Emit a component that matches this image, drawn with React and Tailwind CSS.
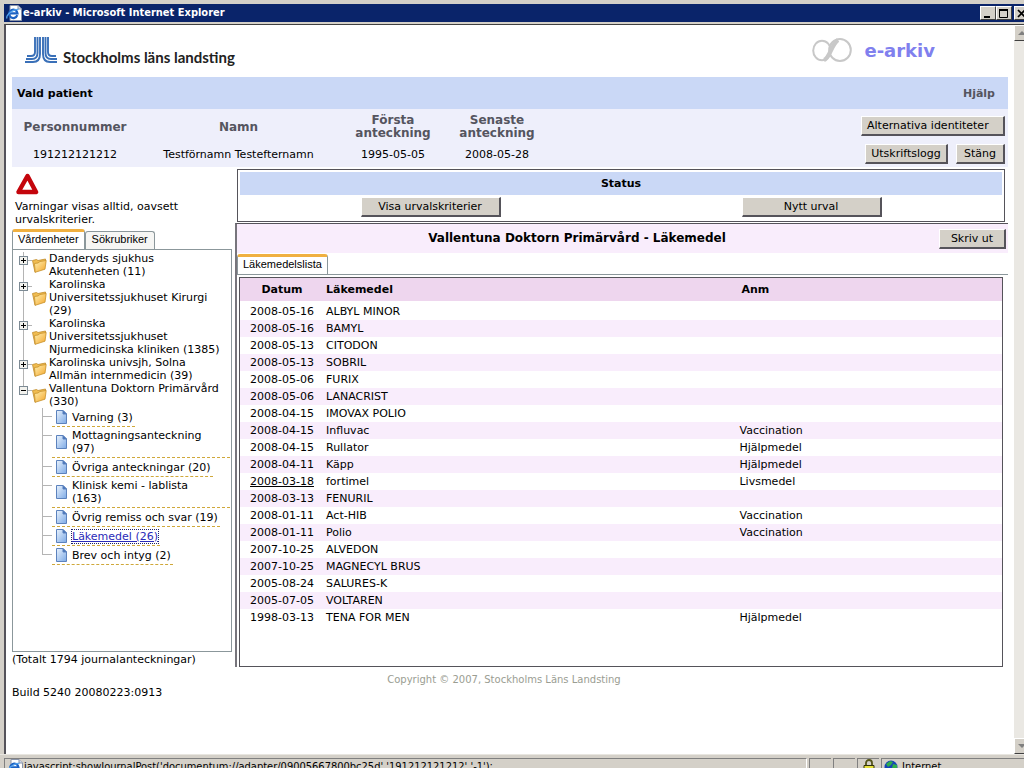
import React, { useState } from 'react';
import clsx from 'clsx';

const UNITS = [
  { name: 'Danderyds sjukhus\nAkutenheten (11)' },
  { name: 'Karolinska\nUniversitetssjukhuset Kirurgi\n(29)' },
  { name: 'Karolinska\nUniversitetssjukhuset\nNjurmedicinska kliniken (1385)' },
  { name: 'Karolinska univsjh, Solna\nAllmän internmedicin (39)' },
  { name: 'Vallentuna Doktorn Primärvård\n(330)', open: true },
];

const DOCUMENTS = [
  'Varning (3)',
  'Mottagningsanteckning\n(97)',
  'Övriga anteckningar (20)',
  'Klinisk kemi - lablista\n(163)',
  'Övrig remiss och svar (19)',
  'Läkemedel (26)',
  'Brev och intyg (2)',
];

const MEDICINES = [
  ['2008-05-16', 'ALBYL MINOR', ''],
  ['2008-05-16', 'BAMYL', ''],
  ['2008-05-13', 'CITODON', ''],
  ['2008-05-13', 'SOBRIL', ''],
  ['2008-05-06', 'FURIX', ''],
  ['2008-05-06', 'LANACRIST', ''],
  ['2008-04-15', 'IMOVAX POLIO', ''],
  ['2008-04-15', 'Influvac', 'Vaccination'],
  ['2008-04-15', 'Rullator', 'Hjälpmedel'],
  ['2008-04-11', 'Käpp', 'Hjälpmedel'],
  ['2008-03-18', 'fortimel', 'Livsmedel', true],
  ['2008-03-13', 'FENURIL', ''],
  ['2008-01-11', 'Act-HIB', 'Vaccination'],
  ['2008-01-11', 'Polio', 'Vaccination'],
  ['2007-10-25', 'ALVEDON', ''],
  ['2007-10-25', 'MAGNECYL BRUS', ''],
  ['2005-08-24', 'SALURES-K', ''],
  ['2005-07-05', 'VOLTAREN', ''],
  ['1998-03-13', 'TENA FOR MEN', 'Hjälpmedel'],
];

/* ---------- icons ---------- */

const ExplorerIcon = () => (
  <svg viewBox="0 0 16 16" className="w-4 h-4 shrink-0" aria-hidden="true">
    <path d="M4 0.5h8l3.5 3.5v11.5H4z" fill="#fff" stroke="#8a94a8" />
    <path d="M12 0.5v3.500h3.500" fill="#cfd8ea" stroke="#8a94a8" />
    <path d="M11.300 10.200A4.200 4.200 0 1 1 11.500 8.300H4" fill="none" stroke="#1c62c4" strokeWidth="2.200" />
    <path d="M1 13.500C-0.500 10 8 3.500 12.500 4.500" fill="none" stroke="#54a4ee" strokeWidth="1.300" />
  </svg>
);

const CountyLogo = () => (
  <svg viewBox="0 0 33 27" className="w-[33px] h-[27px]" fill="none" stroke="#3a70b8" strokeWidth="1.900" aria-hidden="true">
    <path d="M10 1V16Q10 20 6 20H2" />
    <path d="M12.500 1V17Q12.500 23 7 23H1" />
    <path d="M15 1V18Q15 26 8 26H0" />
    <path d="M18 1V18Q18 26 25 26H32" />
    <path d="M20.500 1V17Q20.500 23 26 23H32" />
    <path d="M23 1V16Q23 20 27 20H31" />
  </svg>
);

const InfinityLogo = () => (
  <svg viewBox="0 0 40 25" className="w-10 h-[25px]" fill="none" stroke="#c8c8c8" aria-hidden="true">
    <ellipse cx="10" cy="12.500" rx="8.800" ry="9.800" strokeWidth="2" />
    <ellipse cx="28" cy="12" rx="10.800" ry="11" strokeWidth="2" />
    <path d="M12 22C18 20 19 7 26 2" strokeWidth="4.200" />
  </svg>
);

const WarningIcon = () => (
  <svg viewBox="0 0 24 22" className="w-6 h-[22px]" aria-hidden="true">
    <path d="M12.500 3L21 19H3.500Z" fill="#fff" stroke="#c4050c" strokeWidth="4.500" strokeLinejoin="round" />
  </svg>
);

const FolderIcon = () => (
  <svg viewBox="0 0 15 16" className="w-[15px] h-4 shrink-0" aria-hidden="true">
    <defs>
      <linearGradient id="folder" x1="0" y1="0" x2="1" y2="1">
        <stop offset="0" stopColor="#fff2b4" />
        <stop offset="1" stopColor="#f4a428" />
      </linearGradient>
    </defs>
    <path d="M0.500 3.500L4.500 2.500L6 3.500L13.500 2V6L3 15.300Z" fill="#f0bc50" stroke="#c08a28" strokeWidth="0.800" />
    <path d="M2.500 6.500L6 6L8 4.500L14.200 3.500L13 12.200L3.200 15.300Z" fill="url(#folder)" stroke="#c8922c" strokeWidth="0.800" />
  </svg>
);

const DocumentIcon = () => (
  <svg viewBox="0 0 11 14" className="w-[11px] h-[14px] shrink-0" aria-hidden="true">
    <defs>
      <linearGradient id="doc" x1="0" y1="0" x2="1" y2="1">
        <stop offset="0" stopColor="#eaf3fd" />
        <stop offset="1" stopColor="#7daae6" />
      </linearGradient>
    </defs>
    <path d="M0.500 0.500H7L10.500 4V13.500H0.500Z" fill="url(#doc)" stroke="#5c82bd" />
    <path d="M7 0.500V4H10.500Z" fill="#3f6fb8" stroke="#5c82bd" />
  </svg>
);

const PadlockIcon = () => (
  <svg viewBox="0 0 12 16" className="w-3 h-4" aria-hidden="true">
    <path d="M3 8V4a3 3 0 0 1 6 0v4" fill="none" stroke="#55551a" strokeWidth="1.800" />
    <path d="M1 6.500h10v8H1z" fill="#e8e23c" stroke="#33330c" />
  </svg>
);

const GlobeIcon = () => (
  <svg viewBox="0 0 14 14" className="w-[14px] h-[14px]" aria-hidden="true">
    <circle cx="7" cy="7" r="6.500" fill="#1644b8" />
    <path d="M2 4l4-3 3 1-2 3-3 2zM9 4l4 1v4l-3 2-2-3z" fill="#2fae4c" />
  </svg>
);

/* ---------- small parts ---------- */

const ClassicButton = ({ className, children, ...rest }) => (
  <button
    type="button"
    className={clsx(
      'h-5 whitespace-nowrap border-t border-l border-r-2 border-b-2 border-t-white border-l-white border-r-[#55535a] border-b-[#55535a] bg-[#d4d0c8] pt-px text-[11px] leading-4 text-black',
      className
    )}
    {...rest}
  >
    {children}
  </button>
);

const WindowButton = ({ label, children }) => (
  <button
    type="button"
    aria-label={label}
    className="w-4 h-[14px] shrink-0 flex items-center justify-center border border-t-white border-l-white border-r-[#404040] border-b-[#404040] bg-[#d4d0c8]"
  >
    {children}
  </button>
);

const ScrollButton = ({ label, up }) => (
  <button
    type="button"
    aria-label={label}
    className="w-4 h-4 shrink-0 flex items-center justify-center border border-t-white border-l-white border-r-[#404040] border-b-[#404040] bg-[#d4d0c8]"
  >
    <svg viewBox="0 0 8 4" className="w-2 h-1" fill="#808080" aria-hidden="true">
      <path d={up ? 'M0 4L4 0L8 4Z' : 'M0 0L4 4L8 0Z'} />
    </svg>
  </button>
);

const Tab = ({ active, onClick, children }) => (
  <button
    type="button"
    role="tab"
    aria-selected={active}
    onClick={onClick}
    className={clsx(
      "rounded-t-[3px] border-x border-[#8b979b] font-['Liberation_Sans',Arial,sans-serif] text-[11px] leading-[13px] text-black",
      active ? 'h-5 border-t-[3px] border-t-[#f0b040] bg-white px-[5px] pb-[3px]' : 'h-[18px] border-t bg-[#f6f6f4] px-1.5 pb-0.5'
    )}
  >
    {children}
  </button>
);

/* ---------- window frame ---------- */

const TitleBar = () => (
  <div className="ml-1 mt-1 h-[18px] flex items-center justify-between overflow-hidden bg-[#0a246a] pl-0.5">
    <div className="flex items-center gap-px">
      <ExplorerIcon />
      <span className="font-['DejaVu_Sans_Condensed','DejaVu_Sans',sans-serif] text-[11px] leading-4 font-bold text-white">
        e-arkiv - Microsoft Internet Explorer
      </span>
    </div>
    <div className="-mr-1.5 flex">
      <WindowButton label="Minimera">
        <svg viewBox="0 0 10 9" className="w-[10px] h-[9px]"><path d="M1 7h6v2H1z" /></svg>
      </WindowButton>
      <WindowButton label="Maximera">
        <svg viewBox="0 0 10 9" className="w-[10px] h-[9px]"><path d="M0.500 1h8v7.500h-8z" fill="none" stroke="#000" /><path d="M0 0h9v2H0z" /></svg>
      </WindowButton>
      <div className="w-0.5" />
      <WindowButton label="Stäng fönster">
        <svg viewBox="0 0 10 9" className="w-[10px] h-[9px]" stroke="#000" strokeWidth="1.700"><path d="M1 1l7 7M8 1l-7 7" /></svg>
      </WindowButton>
    </div>
  </div>
);

const ScrollBar = () => (
  <div className="w-[10px] shrink-0 flex flex-col overflow-hidden bg-[#eae8e3]">
    <ScrollButton label="Rulla upp" up />
    <div className="flex-1" />
    <ScrollButton label="Rulla ned" />
  </div>
);

const StatusBar = () => {
  const cell = 'h-4 shrink-0 flex items-center border-t border-l border-[#808080]';
  return (
    <div className="h-[14px] shrink-0 overflow-hidden border-t border-[#e8e6e0] pt-[3px] pl-1 font-['DejaVu_Sans_Condensed','DejaVu_Sans',sans-serif] text-[11px] leading-[13px] text-black">
      <div className="flex gap-0.5">
        <div className="h-4 min-w-0 flex-1 flex items-center gap-px border-t border-l border-r border-t-[#808080] border-l-[#808080] border-r-white pl-0.5">
          <ExplorerIcon />
          <span className="truncate">
            javascript:showJournalPost('documentum://adapter/09005667800bc25d','191212121212','-1');
          </span>
        </div>
        <div className={clsx(cell, 'w-[22px]')} />
        <div className={clsx(cell, 'w-[22px]')} />
        <div className={clsx(cell, 'w-[22px] justify-center')}><PadlockIcon /></div>
        <div className={clsx(cell, 'w-[143px] gap-1 pl-0.5')}>
          <GlobeIcon />
          <span>Internet</span>
        </div>
      </div>
    </div>
  );
};

/* ---------- page ---------- */

const Header = () => (
  <header className="h-[52px] flex items-start justify-between pl-[13px] pr-[73px]">
    <div className="flex items-start gap-[5px] pt-[11px]">
      <CountyLogo />
      <span className="pt-[11px] font-['Lato',sans-serif] text-[15px] leading-5 font-bold text-[#222]">
        Stockholms läns landsting
      </span>
    </div>
    <div className="flex items-center gap-3 pt-[13px]">
      <InfinityLogo />
      <span className="text-[18px] leading-6 font-bold text-[#8080ee]">e-arkiv</span>
    </div>
  </header>
);

const PatientPanel = () => (
  <section>
    <div className="h-8 flex items-center justify-between bg-[#cad8f6] pl-[5px] pr-[13px] font-bold">
      <h1>Vald patient</h1>
      <a href="#hjalp" className="text-[#55555f]">Hjälp</a>
    </div>
    <div className="flex items-start justify-between bg-[#eeeffb] pr-[3px]">
      <table className="mt-1 table-fixed w-[535px] text-center">
        <thead className="text-[12px] text-[#55555f]">
          <tr className="h-7">
            <th className="w-[126px]">Personnummer</th>
            <th>Namn</th>
            <th className="w-[108px]">Första<br />anteckning</th>
            <th className="w-[100px]">Senaste<br />anteckning</th>
          </tr>
        </thead>
        <tbody>
          <tr className="h-[26px]">
            <td>191212121212</td>
            <td>Testförnamn Testefternamn</td>
            <td>1995-05-05</td>
            <td>2008-05-28</td>
          </tr>
        </tbody>
      </table>
      <div className="flex flex-col items-end gap-2 pt-[7px]">
        <ClassicButton className="w-36 pl-[5px] text-left">Alternativa identiteter</ClassicButton>
        <div className="flex gap-2">
          <ClassicButton className="w-[83px]">Utskriftslogg</ClassicButton>
          <ClassicButton className="w-[49px]">Stäng</ClassicButton>
        </div>
      </div>
    </div>
  </section>
);

const UnitRow = ({ unit, last }) => (
  <li className="flex">
    <div className="w-[9px] shrink-0 flex flex-col items-center">
      <div className="h-1 w-px bg-[#b4b4b4]" />
      <button
        type="button"
        aria-label={unit.open ? 'Fäll ihop' : 'Fäll ut'}
        className="w-[9px] h-[9px] shrink-0 border border-[#7c8a94] bg-[#f2f2ee]"
      >
        <svg viewBox="0 0 7 7" className="w-[7px] h-[7px]" stroke="#000">
          <path d={unit.open ? 'M1 3.500h5' : 'M1 3.500h5M3.500 1v5'} />
        </svg>
      </button>
      {!last && <div className="w-px flex-1 bg-[#b4b4b4]" />}
    </div>
    <div className="mt-2 h-px w-1 shrink-0 bg-[#b4b4b4]" />
    <a href="#enhet" className="flex items-center gap-0.5">
      <FolderIcon />
      <span className="whitespace-pre">{unit.name}</span>
    </a>
  </li>
);

const DocumentRow = ({ name, last, selected, onSelect }) => (
  <li className="flex">
    <div className="w-[10px] shrink-0 flex flex-col">
      <div className="h-[9px] border-l border-b border-[#b4b4b4]" />
      {!last && <div className="flex-1 border-l border-[#b4b4b4]" />}
    </div>
    <a
      href="#dokument"
      onClick={onSelect}
      className={clsx(
        'min-h-[19px] flex items-center gap-[5px] border-b border-dashed border-[#cfa83a] pl-1 pr-0.5',
        name.includes('\n') && 'flex-1'
      )}
    >
      <DocumentIcon />
      <span
        className={clsx(
          'my-0.5 whitespace-pre',
          selected && 'text-[#2a2ab8] underline outline-1 outline-dotted outline-[#222266]'
        )}
      >
        {name}
      </span>
    </a>
  </li>
);

const Sidebar = () => {
  const [tab, setTab] = useState(0);
  const [selected, setSelected] = useState('Läkemedel (26)');

  return (
    <aside className="w-[220px] shrink-0 flex flex-col pt-1.5">
      <div className="pl-[3px]">
        <WarningIcon />
        <p className="pt-[5px] pb-1">
          Varningar visas alltid, oavsett<br />urvalskriterier.
        </p>
      </div>
      <div role="tablist" className="h-[19px] relative z-10 flex items-end">
        <Tab active={tab === 0} onClick={() => setTab(0)}>Vårdenheter</Tab>
        <Tab active={tab === 1} onClick={() => setTab(1)}>Sökrubriker</Tab>
      </div>
      <div className="flex-1 border border-[#8b979b] pt-0.5 pl-1.5">
        <ul>
          {UNITS.map((unit, i) => (
            <UnitRow key={unit.name} unit={unit} last={i === UNITS.length - 1} />
          ))}
        </ul>
        <ul className="ml-[23px] mr-px">
          {DOCUMENTS.map((name, i) => (
            <DocumentRow
              key={name}
              name={name}
              last={i === DOCUMENTS.length - 1}
              selected={name === selected}
              onSelect={() => setSelected(name)}
            />
          ))}
        </ul>
      </div>
      <p className="pt-px pb-1">(Totalt 1794 journalanteckningar)</p>
    </aside>
  );
};

const StatusBox = () => (
  <section className="mt-0.5 ml-0.5 mr-[3px] border border-[#55535a] p-0.5">
    <h2 className="h-[23px] flex items-center justify-center bg-[#cad8f6] font-bold">Status</h2>
    <div className="h-6 grid grid-cols-2 items-center justify-items-center">
      <ClassicButton className="w-[140px]">Visa urvalskriterier</ClassicButton>
      <ClassicButton className="w-[140px]">Nytt urval</ClassicButton>
    </div>
  </section>
);

const MedicineTable = () => (
  <table className="w-full table-fixed text-left">
    <thead>
      <tr className="h-[23px] bg-[#eed6ee]">
        <th className="w-[84px] text-center">Datum</th>
        <th className="w-[54%] pl-0.5">Läkemedel</th>
        <th className="pl-1.5">Anm</th>
      </tr>
      <tr className="h-0.5" />
    </thead>
    <tbody>
      {MEDICINES.map(([date, name, note, linked], i) => (
        <tr key={i} className="h-[17px] even:bg-[#f9edfc]">
          <td className="text-center">
            {linked ? <a href="#post" className="underline">{date}</a> : date}
          </td>
          <td className="pl-0.5">{name}</td>
          <td className="pl-1">{note}</td>
        </tr>
      ))}
    </tbody>
  </table>
);

const JournalPanel = () => (
  <section className="mt-px flex-1 border-t border-l-2 border-t-[#55535a] border-l-[#77757c]">
    <div className="h-[29px] flex items-center bg-[#f9edfc] pr-0.5">
      <h2 className="flex-1 pr-[22px] text-center text-[12px] font-bold">
        Vallentuna Doktorn Primärvård - Läkemedel
      </h2>
      <ClassicButton className="w-[67px]">Skriv ut</ClassicButton>
    </div>
    <div role="tablist" className="flex items-end border-b border-[#8b979b] pt-px">
      <Tab active>Läkemedelslista</Tab>
    </div>
    <div className="mt-0.5 ml-0.5 mr-[5px] min-h-[390px] border border-[#55535a]">
      <MedicineTable />
    </div>
  </section>
);

const App = () => {
  return (
    <div className="h-screen flex flex-col overflow-hidden bg-[#d4d0c8]">
      <TitleBar />
      <div className="ml-1 mt-0.5 min-h-0 flex-1 flex border-t border-l-2 border-t-[#404040] border-l-[#55535a] bg-white">
        <main className="min-w-0 flex-1 px-1.5 font-['DejaVu_Sans',Verdana,sans-serif] text-[11px] leading-[13px] text-black">
          <Header />
          <PatientPanel />
          <div className="flex gap-[3px]">
            <Sidebar />
            <div className="min-w-0 flex-1 flex flex-col pb-[3px]">
              <StatusBox />
              <JournalPanel />
            </div>
          </div>
          <footer>
            <p className="pt-[3px] pr-3 text-center text-[10px] text-[#9a9d92]">
              Copyright © 2007, Stockholms Läns Landsting
            </p>
            <p>Build 5240 20080223:0913</p>
          </footer>
        </main>
        <ScrollBar />
      </div>
      <StatusBar />
    </div>
  );
};

export default App;
